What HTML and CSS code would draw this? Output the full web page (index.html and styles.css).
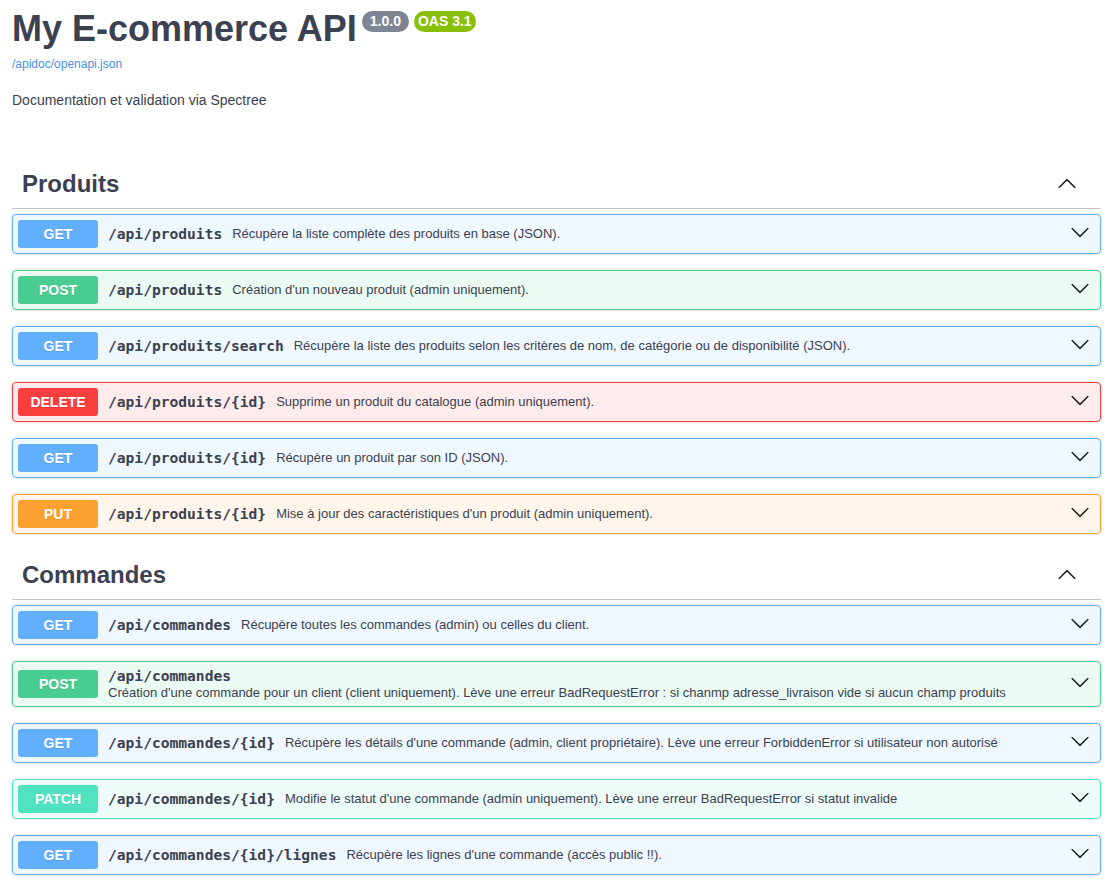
FILE: index.html
```html
<!DOCTYPE html>
<html lang="fr">
<head>
<meta charset="utf-8">
<title>My E-commerce API</title>
<link rel="stylesheet" href="styles.css">
</head>
<body>
<div class="wrap">
  <div class="info">
    <div class="title-row">
      <h2 class="title">My E-commerce API</h2>
      <span class="badge badge-version">1.0.0</span>
      <span class="badge badge-oas">OAS 3.1</span>
    </div>
    <a class="spec-link" href="#">/apidoc/openapi.json</a>
    <p class="info-desc">Documentation et validation via Spectree</p>
  </div>

  <section class="tag-section first">
    <h3 class="tag"><span class="tag-name">Produits</span>
      <svg class="arrow-up" width="20" height="20" viewBox="0 0 20 20"><path d="M17.418 14.908C17.69 15.176 18.127 15.176 18.397 14.908C18.667 14.64 18.668 14.207 18.397 13.939L10.489 6.109C10.219 5.841 9.782 5.841 9.51 6.109L1.602 13.939C1.332 14.207 1.332 14.64 1.602 14.908C1.873 15.176 2.311 15.176 2.581 14.908L10 7.767L17.418 14.908Z"/></svg>
    </h3>
    <div class="opblock op-get"><span class="method">GET</span><div class="summary"><span class="path">/api/produits</span><span class="op-desc">Récupère la liste complète des produits en base (JSON).</span></div><span class="control"><svg width="20" height="20" viewBox="0 0 20 20"><path d="M17.418 6.109c.272-.268.709-.268.979 0s.271.701 0 .969l-7.908 7.83c-.27.268-.707.268-.979 0l-7.908-7.83c-.27-.268-.27-.701 0-.969.271-.268.709-.268.979 0L10 13.25l7.418-7.141z"/></svg></span></div>
    <div class="opblock op-post"><span class="method">POST</span><div class="summary"><span class="path">/api/produits</span><span class="op-desc">Création d'un nouveau produit (admin uniquement).</span></div><span class="control"><svg width="20" height="20" viewBox="0 0 20 20"><path d="M17.418 6.109c.272-.268.709-.268.979 0s.271.701 0 .969l-7.908 7.83c-.27.268-.707.268-.979 0l-7.908-7.83c-.27-.268-.27-.701 0-.969.271-.268.709-.268.979 0L10 13.25l7.418-7.141z"/></svg></span></div>
    <div class="opblock op-get"><span class="method">GET</span><div class="summary"><span class="path">/api/produits/search</span><span class="op-desc">Récupère la liste des produits selon les critères de nom, de catégorie ou de disponibilité (JSON).</span></div><span class="control"><svg width="20" height="20" viewBox="0 0 20 20"><path d="M17.418 6.109c.272-.268.709-.268.979 0s.271.701 0 .969l-7.908 7.83c-.27.268-.707.268-.979 0l-7.908-7.83c-.27-.268-.27-.701 0-.969.271-.268.709-.268.979 0L10 13.25l7.418-7.141z"/></svg></span></div>
    <div class="opblock op-delete"><span class="method">DELETE</span><div class="summary"><span class="path">/api/produits/{id}</span><span class="op-desc">Supprime un produit du catalogue (admin uniquement).</span></div><span class="control"><svg width="20" height="20" viewBox="0 0 20 20"><path d="M17.418 6.109c.272-.268.709-.268.979 0s.271.701 0 .969l-7.908 7.83c-.27.268-.707.268-.979 0l-7.908-7.83c-.27-.268-.27-.701 0-.969.271-.268.709-.268.979 0L10 13.25l7.418-7.141z"/></svg></span></div>
    <div class="opblock op-get"><span class="method">GET</span><div class="summary"><span class="path">/api/produits/{id}</span><span class="op-desc">Récupère un produit par son ID (JSON).</span></div><span class="control"><svg width="20" height="20" viewBox="0 0 20 20"><path d="M17.418 6.109c.272-.268.709-.268.979 0s.271.701 0 .969l-7.908 7.83c-.27.268-.707.268-.979 0l-7.908-7.83c-.27-.268-.27-.701 0-.969.271-.268.709-.268.979 0L10 13.25l7.418-7.141z"/></svg></span></div>
    <div class="opblock op-put"><span class="method">PUT</span><div class="summary"><span class="path">/api/produits/{id}</span><span class="op-desc">Mise à jour des caractéristiques d'un produit (admin uniquement).</span></div><span class="control"><svg width="20" height="20" viewBox="0 0 20 20"><path d="M17.418 6.109c.272-.268.709-.268.979 0s.271.701 0 .969l-7.908 7.83c-.27.268-.707.268-.979 0l-7.908-7.83c-.27-.268-.27-.701 0-.969.271-.268.709-.268.979 0L10 13.25l7.418-7.141z"/></svg></span></div>
  </section>

  <section class="tag-section">
    <h3 class="tag"><span class="tag-name">Commandes</span>
      <svg class="arrow-up" width="20" height="20" viewBox="0 0 20 20"><path d="M17.418 14.908C17.69 15.176 18.127 15.176 18.397 14.908C18.667 14.64 18.668 14.207 18.397 13.939L10.489 6.109C10.219 5.841 9.782 5.841 9.51 6.109L1.602 13.939C1.332 14.207 1.332 14.64 1.602 14.908C1.873 15.176 2.311 15.176 2.581 14.908L10 7.767L17.418 14.908Z"/></svg>
    </h3>
    <div class="opblock op-get"><span class="method">GET</span><div class="summary"><span class="path">/api/commandes</span><span class="op-desc">Récupère toutes les commandes (admin) ou celles du client.</span></div><span class="control"><svg width="20" height="20" viewBox="0 0 20 20"><path d="M17.418 6.109c.272-.268.709-.268.979 0s.271.701 0 .969l-7.908 7.83c-.27.268-.707.268-.979 0l-7.908-7.830c-.27-.268-.27-.701 0-.969.271-.268.709-.268.979 0L10 13.25l7.418-7.141z"/></svg></span></div>
    <div class="opblock op-post"><span class="method">POST</span><div class="summary"><span class="path">/api/commandes</span><span class="op-desc">Création d'une commande pour un client (client uniquement). Lève une erreur BadRequestError : si chanmp adresse_livraison vide si aucun champ produits</span></div><span class="control"><svg width="20" height="20" viewBox="0 0 20 20"><path d="M17.418 6.109c.272-.268.709-.268.979 0s.271.701 0 .969l-7.908 7.83c-.27.268-.707.268-.979 0l-7.908-7.83c-.27-.268-.27-.701 0-.969.271-.268.709-.268.979 0L10 13.25l7.418-7.141z"/></svg></span></div>
    <div class="opblock op-get"><span class="method">GET</span><div class="summary"><span class="path">/api/commandes/{id}</span><span class="op-desc">Récupère les détails d'une commande (admin, client propriétaire). Lève une erreur ForbiddenError si utilisateur non autorisé</span></div><span class="control"><svg width="20" height="20" viewBox="0 0 20 20"><path d="M17.418 6.109c.272-.268.709-.268.979 0s.271.701 0 .969l-7.908 7.83c-.27.268-.707.268-.979 0l-7.908-7.83c-.27-.268-.27-.701 0-.969.271-.268.709-.268.979 0L10 13.25l7.418-7.141z"/></svg></span></div>
    <div class="opblock op-patch"><span class="method">PATCH</span><div class="summary"><span class="path">/api/commandes/{id}</span><span class="op-desc">Modifie le statut d'une commande (admin uniquement). Lève une erreur BadRequestError si statut invalide</span></div><span class="control"><svg width="20" height="20" viewBox="0 0 20 20"><path d="M17.418 6.109c.272-.268.709-.268.979 0s.271.701 0 .969l-7.908 7.83c-.27.268-.707.268-.979 0l-7.908-7.83c-.27-.268-.27-.701 0-.969.271-.268.709-.268.979 0L10 13.25l7.418-7.141z"/></svg></span></div>
    <div class="opblock op-get"><span class="method">GET</span><div class="summary"><span class="path">/api/commandes/{id}/lignes</span><span class="op-desc">Récupère les lignes d'une commande (accès public !!).</span></div><span class="control"><svg width="20" height="20" viewBox="0 0 20 20"><path d="M17.418 6.109c.272-.268.709-.268.979 0s.271.701 0 .969l-7.908 7.83c-.27.268-.707.268-.979 0l-7.908-7.83c-.27-.268-.27-.701 0-.969.271-.268.709-.268.979 0L10 13.25l7.418-7.141z"/></svg></span></div>
  </section>
</div>
</body>
</html>
```

FILE: styles.css
```css
* { box-sizing: border-box; }

body {
  margin: 0;
  font-family: "Liberation Sans", Arial, sans-serif;
  color: #3b4151;
  background: #fff;
}

.wrap {
  padding: 0 16px 0 12px;
}

.title-row {
  display: flex;
  align-items: flex-start;
  padding-top: 8px;
}

.title {
  margin: 0;
  font-size: 36px;
  line-height: 41px;
  font-weight: 700;
  color: #3b4151;
}

.badge {
  margin-left: 5px;
  margin-top: 3px;
  padding: 2px 8px 3px;
  border-radius: 57px;
  font-size: 14px;
  line-height: 16px;
  font-weight: 700;
  color: #fff;
}

.badge-version { background: #7d8492; }
.badge-oas { background: #89bf04; padding: 2px 4px 3px; }

.spec-link {
  display: block;
  margin-top: 8px;
  font-size: 12px;
  line-height: 14px;
  color: #4990e2;
  text-decoration: none;
}

.info-desc {
  margin: 21px 0 0;
  font-size: 14px;
  line-height: 16px;
}

.tag-section.first { margin-top: 51px; }

.tag {
  display: flex;
  align-items: center;
  margin: 0 0 5px;
  padding: 10px 24px 10px 10px;
  min-height: 50px;
  border-bottom: 1px solid rgba(59, 65, 81, .3);
  font-size: 24px;
  font-weight: 700;
  color: #3b4151;
}

.tag-name {
  flex: 1;
  line-height: 28px;
}

.arrow-up {
  flex: none;
  margin-bottom: 2px;
  fill: #1b1b1b;
}

.opblock {
  display: flex;
  align-items: center;
  min-height: 40px;
  margin-bottom: 16px;
  padding: 5px;
  border: 1px solid;
  border-radius: 4px;
  box-shadow: 0 0 3px rgba(0, 0, 0, .19);
}

.method {
  flex: none;
  width: 80px;
  padding: 6px 0;
  border-radius: 3px;
  font-size: 14px;
  line-height: 16px;
  font-weight: 700;
  text-align: center;
  color: #fff;
  text-shadow: 0 1px 0 rgba(0, 0, 0, .1);
}

.summary {
  flex: 1;
  min-width: 0;
  display: flex;
  flex-wrap: wrap;
  align-items: center;
  gap: 0 10px;
  padding: 0 10px;
}

.path {
  font-family: "DejaVu Sans Mono", "Liberation Mono", monospace;
  font-size: 14.6px;
  line-height: 18px;
  font-weight: 700;
  color: #3b4151;
}

.op-desc {
  font-size: 13px;
  line-height: 16px;
  color: #3b4151;
}

.control {
  flex: none;
  display: flex;
  padding: 0 5px 0 10px;
}

.control svg {
  margin-bottom: 4px;
  fill: #1b1b1b;
}

.op-get { background: rgba(97, 175, 254, .1); border-color: #61affe; }
.op-get .method { background: #61affe; }

.op-post { background: rgba(73, 204, 144, .1); border-color: #49cc90; }
.op-post .method { background: #49cc90; }

.op-delete { background: rgba(249, 62, 62, .1); border-color: #f93e3e; }
.op-delete .method { background: #f93e3e; }

.op-put { background: rgba(252, 161, 48, .1); border-color: #fca130; }
.op-put .method { background: #fca130; }

.op-patch { background: rgba(80, 227, 194, .1); border-color: #50e3c2; }
.op-patch .method { background: #50e3c2; }
```
